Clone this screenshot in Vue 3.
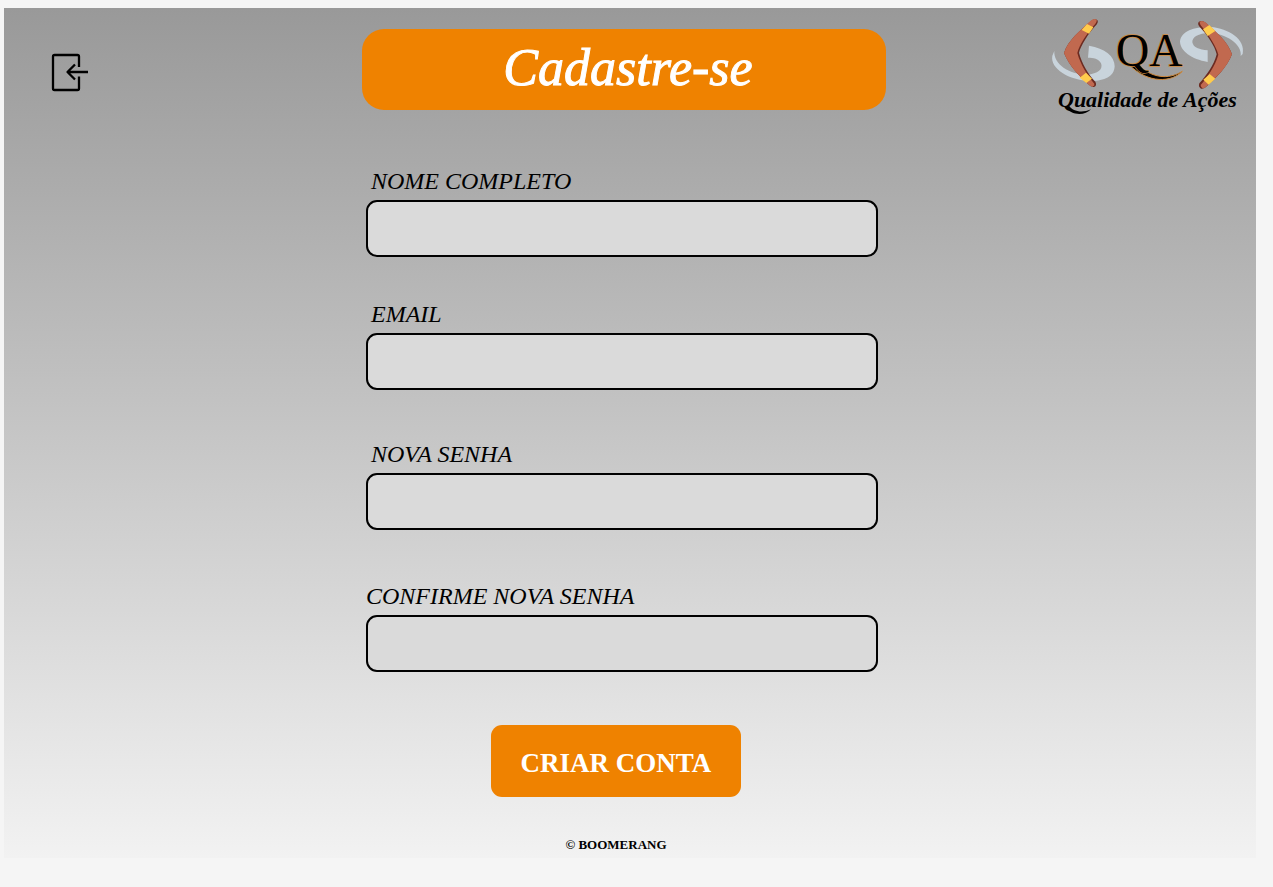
<script setup>
import { reactive } from 'vue'

const fields = [
  { id: 'nome', label: 'NOME COMPLETO', type: 'text', autocomplete: 'name' },
  { id: 'email', label: 'EMAIL', type: 'email', autocomplete: 'email' },
  { id: 'senha', label: 'NOVA SENHA', type: 'password', autocomplete: 'new-password' },
  { id: 'confirma', label: 'CONFIRME NOVA SENHA', type: 'password', autocomplete: 'new-password' },
]
const values = reactive({ nome: '', email: '', senha: '', confirma: '' })
</script>

<template>
  <div class="page">
    <header class="header">
      <button class="back" type="button" aria-label="Voltar">
        <svg width="40" height="40" viewBox="0 0 40 40" fill="none" stroke="#000" stroke-width="2.3">
          <path d="M29 15V4.500Q29 3 27.500 3H4.500Q3 3 3 4.500V36.500Q3 38 4.500 38H27.500Q29 38 29 36.500V24.500" />
          <path d="M38 20H18M25 12.500L17.500 20L25 27.500" stroke-linejoin="round" />
        </svg>
      </button>
      <h1 class="title">Cadastre-se</h1>
      <svg class="logo" width="192" height="98" viewBox="36 39 576 294" role="img" aria-label="Qualidade de Ações">
        <g fill="#c9d4dc">
          <path d="M147 122C195 130 224 153 224 184C223 216 190 229 150 228C88 225 30 192 37 152L43 138C40 177 88 209 140 209C175 207 190 192 183 175C176 161 160 158 144 158Z" />
          <path d="M503 136V171C455 163 420 138 420 109C424 77 465 65 512 66C565 70 618 103 608 147L602 153C608 118 555 84 508 84C475 85 456 96 457 112C460 128 478 134 503 136Z" />
        </g>
        <path d="M153 48Q163 39 172 45Q177 52 165 64C145 86 122 123 117 143C125 174 144 207 166 230Q172 241 162 246Q154 248 145 238C118 213 88 184 72 144C83 107 121 76 153 48Z" fill="#6b2a20" />
        <path d="M151 48Q162 39 170 44Q172 50 161 62C139 88 118 119 112 144C121 177 142 212 163 236Q165 242 158 245Q152 245 143 236C116 211 88 184 72 144C83 107 121 76 151 48Z" fill="#c1694f" />
        <path d="M141 57L160 67L147 86L125 75ZM119 218L138 203L156 221L139 234Z" fill="#ffcc4d" />
        <path d="M497 53Q485 44 476 51Q471 59 482 69C503 91 525 124 530 148C522 180 500 211 478 235Q474 246 483 251Q492 253 501 243C528 219 561 187 576 148C565 111 527 80 497 53Z" fill="#6b2a20" />
        <path d="M498 53Q487 45 479 50Q478 57 487 67C508 93 529 125 535 149C526 182 503 216 482 240Q482 247 488 250Q495 250 503 241C530 217 561 187 576 148C565 111 528 80 498 53Z" fill="#c1694f" />
        <path d="M489 73L508 60L526 78L503 93ZM509 207L526 221L506 239L490 224Z" fill="#ffcc4d" />
        <path d="M268 180L292 178C318 204 370 234 427 199C396 232 325 237 268 180Z" fill="#000" stroke="#d08a3c" stroke-width="3" />
        <text class="initials" x="228" y="184">QA</text>
        <path d="M74 304L88 303C98 318 124 326 153 313C134 334 92 332 74 304Z" fill="#000" />
        <text class="brand" x="54" y="307">Qualidade de Ações</text>
      </svg>
    </header>

    <main class="main">
      <form class="form" @submit.prevent>
        <div v-for="f in fields" :key="f.id" class="field" :class="'field-' + f.id">
          <label :for="f.id">{{ f.label }}</label>
          <input :id="f.id" v-model="values[f.id]" :type="f.type" :autocomplete="f.autocomplete" />
        </div>
        <div class="actions">
          <button class="submit" type="submit">CRIAR CONTA</button>
          <footer class="copyright">© BOOMERANG</footer>
        </div>
      </form>
    </main>
  </div>
</template>

<style>
body {
  background: #f5f5f5;
}
</style>

<style scoped>
.page {
  display: flow-root;
  margin: 8px 17px 28px 4px;
  background: linear-gradient(180deg, #999, #f2f2f2);
  color: #000;
  font-family: "Liberation Serif", "Times New Roman", serif;
}
.header {
  display: grid;
  grid-template-columns: 1fr minmax(0, 524px) 1fr;
  align-items: start;
  padding: 10px 12px 0 0;
}
.back {
  justify-self: start;
  margin: 34px 0 0 46px;
  padding: 0;
  border: 0;
  background: none;
  line-height: 0;
  cursor: pointer;
}
.title {
  margin: 11px 0 0;
  padding: 0 0 4px 8px;
  border-radius: 22px;
  background: #ef8200;
  color: #fff;
  font-size: 52px;
  font-style: italic;
  font-weight: 400;
  line-height: 77px;
  text-align: center;
  -webkit-text-stroke: 1px #fff;
}
.logo {
  justify-self: end;
  overflow: visible;
}
.initials {
  font-size: 138px;
  paint-order: stroke;
  stroke: #d08a3c;
  stroke-width: 4px;
}
.brand {
  font-size: 66px;
  font-style: italic;
  font-weight: 700;
}
.main {
  padding: 51px 16px 5px 0;
}
.form {
  max-width: 512px;
  margin: 0 auto;
}
.field {
  display: flex;
  flex-direction: column;
  gap: 5px;
}
.field label {
  padding-left: 5px;
  font-size: 24px;
  font-style: italic;
  line-height: 28px;
}
.field-nome {
  margin-bottom: 43px;
}
.field-email {
  margin-bottom: 50px;
}
.field-senha {
  margin-bottom: 52px;
}
.field-confirma label {
  padding-left: 0;
}
.field input {
  box-sizing: border-box;
  width: 100%;
  height: 57px;
  padding: 0 16px;
  border: 2px solid #000;
  border-radius: 11px;
  background: #dadada;
  font: inherit;
  font-size: 24px;
}
.actions {
  display: flex;
  flex-direction: column;
  align-items: center;
  gap: 40px;
  margin-top: 53px;
  padding-right: 12px;
}
.submit {
  width: 250px;
  height: 72px;
  padding: 4px 0 0;
  border: 0;
  border-radius: 11px;
  background: #ef8200;
  color: #fff;
  font-family: inherit;
  font-size: 27px;
  font-weight: 700;
  cursor: pointer;
}
.copyright {
  font-size: 13px;
  font-weight: 700;
  line-height: 16px;
}
</style>
